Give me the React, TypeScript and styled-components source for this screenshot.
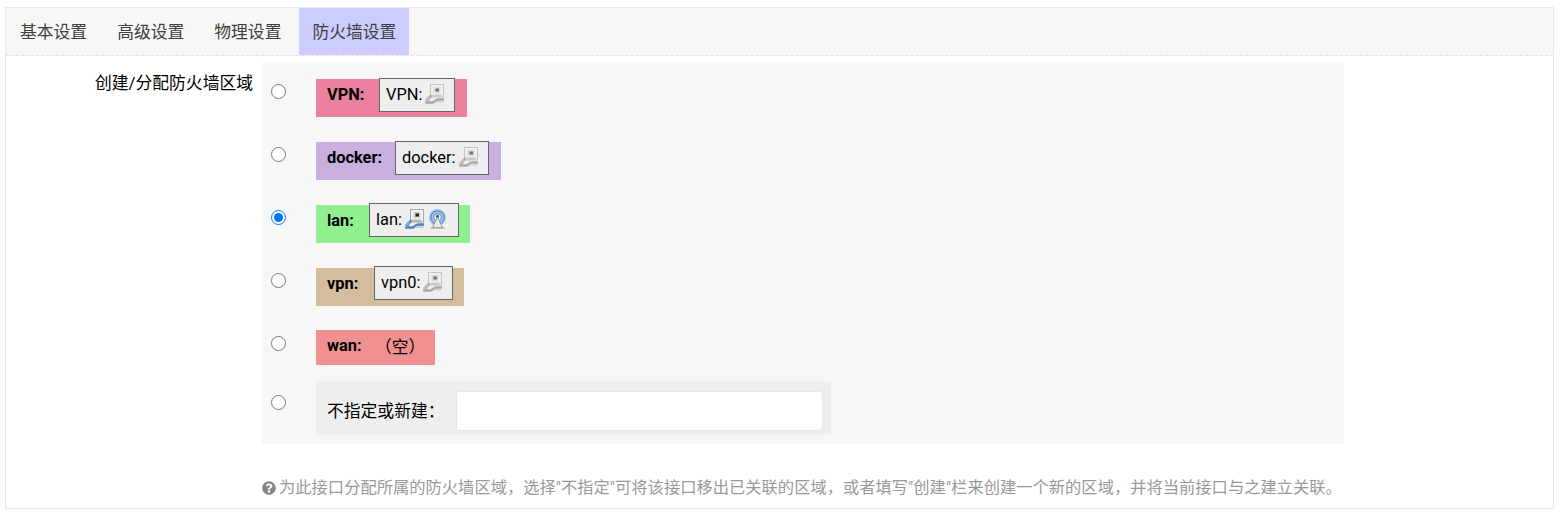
import React from "react";
import styled, { createGlobalStyle } from "styled-components";
import { FaQuestionCircle } from "react-icons/fa";

// Types
interface Zone {
  id: string;
  name: string;
  color: string;
  nameWidth?: number;
  device?: string;
  lift?: number;
  wireless?: boolean;
  active?: boolean;
  checked?: boolean;
}

const zones: Zone[] = [
  { id: "vpn-upper", name: "VPN:", color: "#ec809f", nameWidth: 52, device: "VPN:", lift: 1 },
  { id: "docker", name: "docker:", color: "#c9aee0", nameWidth: 68, device: "docker:", lift: 1 },
  { id: "lan", name: "lan:", color: "#90f090", nameWidth: 42, device: "lan:", lift: 2, wireless: true, active: true, checked: true },
  { id: "vpn", name: "vpn:", color: "#d4bd9c", nameWidth: 47, device: "vpn0:", lift: 2 },
  { id: "wan", name: "wan:", color: "#f09090", nameWidth: 49 },
];

const tabs = ["基本设置", "高级设置", "物理设置", "防火墙设置"];

// Styles
const GlobalStyle = createGlobalStyle`
  html, body {
    margin: 0;
    padding: 0;
    background: #fff;
    font-family: Roboto, "Noto Sans CJK SC", sans-serif;
    font-size: 16.4px;
    color: #000;
  }
`;

const Page = styled.div`
  padding: 7px 6px 0 5px;
`;

const Panel = styled.div`
  height: 502px;
  box-sizing: border-box;
  border: 1px solid #e3e8e8;
`;

const TabBar = styled.ul`
  display: flex;
  margin: 0;
  padding: 0;
  height: 48px;
  box-sizing: border-box;
  list-style: none;
  background: #f7f7f7;
  border-bottom: 1px dashed #e2e2e2;
`;

const Tab = styled.li<{ $active?: boolean }>`
  display: flex;
  align-items: center;
  height: 47px;
  box-sizing: border-box;
  padding: 0 ${(p) => (p.$active ? "13px" : "15px")} 2px;
  margin-left: ${(p) => (p.$active ? "3px" : "0")};
  font-size: 16.8px;
  color: #404040;
  background: ${(p) => (p.$active ? "#ccccff" : "transparent")};

  &:first-child {
    padding-left: 14px;
  }
`;

const FormRow = styled.div`
  display: flex;
  padding-top: 6px;
`;

const FieldLabel = styled.label`
  width: 247px;
  padding-top: 10px;
  box-sizing: border-box;
  text-align: right;
  font-size: 16.8px;
  line-height: 22px;
`;

const FieldBody = styled.div`
  margin-left: 9px;
  width: 1082px;
`;

const ZoneList = styled.div`
  padding: 17px 0 9px;
  background: #f7f7f7;
`;

const ZoneRow = styled.div<{ $gap: number }>`
  display: flex;
  align-items: flex-start;
  margin-bottom: ${(p) => p.$gap}px;
`;

const RadioCell = styled.div<{ $top: number }>`
  width: 54px;
  padding: ${(p) => p.$top}px 0 0 9px;
  box-sizing: border-box;
  line-height: 0;
`;

const Radio = styled.input`
  width: 15px;
  height: 15px;
  margin: 0;
`;

const ZoneChip = styled.div<{ $color: string; $tall: boolean }>`
  display: flex;
  align-items: flex-start;
  height: ${(p) => (p.$tall ? "38px" : "35px")};
  padding-left: 11px;
  background: ${(p) => p.$color};
`;

const ZoneName = styled.strong<{ $width: number }>`
  width: ${(p) => p.$width}px;
  line-height: 32px;
  font-weight: 700;
`;

const DeviceBox = styled.div<{ $lift: number }>`
  display: flex;
  align-items: center;
  height: 34px;
  margin: ${(p) => -p.$lift}px ${(p) => 13 - p.$lift}px 0 0;
  padding: 0 10px 2px 6px;
  box-sizing: border-box;
  border: 1px solid #666;
  background: #eee;
`;

const DeviceIcons = styled.span<{ $active?: boolean }>`
  display: inline-flex;
  gap: 3px;
  margin-left: 3px;
  opacity: ${(p) => (p.$active ? 1 : 0.6)};
  filter: ${(p) => (p.$active ? "blur(0.3px)" : "grayscale(1) blur(0.3px)")};
`;

const EmptyNote = styled.span`
  margin: 0 10px 0 -1px;
  font-size: 16.8px;
  line-height: 34px;
`;

const CreateBox = styled.div`
  display: flex;
  width: 515px;
  height: 54px;
  box-sizing: border-box;
  padding: 10px 8px 4px 11px;
  background: #eeeeee;
`;

const CreateLabel = styled.span`
  width: 129px;
  font-size: 16.8px;
  line-height: 41px;
`;

const CreateInput = styled.input`
  flex: 1;
  min-width: 0;
  height: 40px;
  box-sizing: border-box;
  border: 1px solid #e6e6e6;
  border-radius: 3px;
  background: #fff;
  outline: none;
`;

const HelpText = styled.div`
  display: flex;
  align-items: center;
  gap: 3px;
  margin-top: 33px;
  font-size: 16.3px;
  line-height: 22px;
  color: #999;
  white-space: nowrap;

  svg {
    color: #888;
  }
`;

// Icons
const NetworkPortIcon: React.FC = () => (
  <svg width="19" height="20" viewBox="0 0 19 20" aria-hidden="true">
    <rect x="5.5" y="0.5" width="13" height="12.5" fill="#f2f2f2" stroke="#a8a8a8" />
    <rect x="8.5" y="3" width="7" height="6" fill="#cfcfcf" />
    <rect x="10.5" y="4.5" width="3.5" height="3" fill="#222" />
    <path d="M7.5 10.5h9V13h-9z" fill="#b5b5b5" />
    <path d="M6.5 11 L3 15.5 L1.5 18.5 H7.5 C9.5 18.5 10.5 15.5 13.5 15.5 H19" fill="none" stroke="#4f83c4" strokeWidth="2.4" />
    <path d="M0.5 17.5 L4.5 12.5" stroke="#7da7d8" strokeWidth="2.4" />
    <path d="M10.5 18h8" stroke="#c4c4c4" strokeWidth="1.5" />
  </svg>
);

const WirelessIcon: React.FC = () => (
  <svg width="21" height="20" viewBox="0 0 21 20" aria-hidden="true">
    <circle cx="10.5" cy="8.5" r="8.5" fill="#a9c9ec" />
    <circle cx="10.5" cy="8.5" r="6.6" fill="none" stroke="#6496d0" strokeWidth="1.5" />
    <circle cx="10.5" cy="8.5" r="3.8" fill="#e4eefa" stroke="#6496d0" strokeWidth="1.2" />
    <circle cx="10.5" cy="7.5" r="1.4" fill="#39465a" />
    <path d="M10.5 8 L5.5 18.5 H15.5 Z" fill="#ececec" stroke="#8c8c8c" strokeWidth="0.9" />
    <path d="M3.5 19h14" stroke="#a8a8a8" strokeWidth="1.2" />
  </svg>
);

// Component
const App: React.FC = () => (
  <Page>
    <GlobalStyle />
    <Panel>
      <TabBar>
        {tabs.map((tab, i) => (
          <Tab key={tab} $active={i === 3}>
            {tab}
          </Tab>
        ))}
      </TabBar>
      <FormRow>
        <FieldLabel>创建/分配防火墙区域</FieldLabel>
        <FieldBody>
          <ZoneList>
            {zones.map((zone, i) => (
              <ZoneRow key={zone.id} $gap={i === 4 ? 16 : i === 3 ? 24 : 25}>
                <RadioCell $top={i === 4 ? 6 : 5}>
                  <Radio type="radio" name="zone" defaultChecked={zone.checked} />
                </RadioCell>
                <ZoneChip $color={zone.color} $tall={Boolean(zone.device)}>
                  <ZoneName $width={zone.nameWidth ?? 50}>{zone.name}</ZoneName>
                  {zone.device ? (
                    <DeviceBox $lift={zone.lift ?? 1}>
                      {zone.device}
                      <DeviceIcons $active={zone.active}>
                        <NetworkPortIcon />
                        {zone.wireless && <WirelessIcon />}
                      </DeviceIcons>
                    </DeviceBox>
                  ) : (
                    <EmptyNote>（空）</EmptyNote>
                  )}
                </ZoneChip>
              </ZoneRow>
            ))}
            <ZoneRow $gap={0}>
              <RadioCell $top={14}>
                <Radio type="radio" name="zone" />
              </RadioCell>
              <CreateBox>
                <CreateLabel>不指定或新建：</CreateLabel>
                <CreateInput type="text" />
              </CreateBox>
            </ZoneRow>
          </ZoneList>
          <HelpText>
            <FaQuestionCircle size={14} />
            为此接口分配所属的防火墙区域，选择"不指定"可将该接口移出已关联的区域，或者填写"创建"栏来创建一个新的区域，并将当前接口与之建立关联。
          </HelpText>
        </FieldBody>
      </FormRow>
    </Panel>
  </Page>
);

export default App;
